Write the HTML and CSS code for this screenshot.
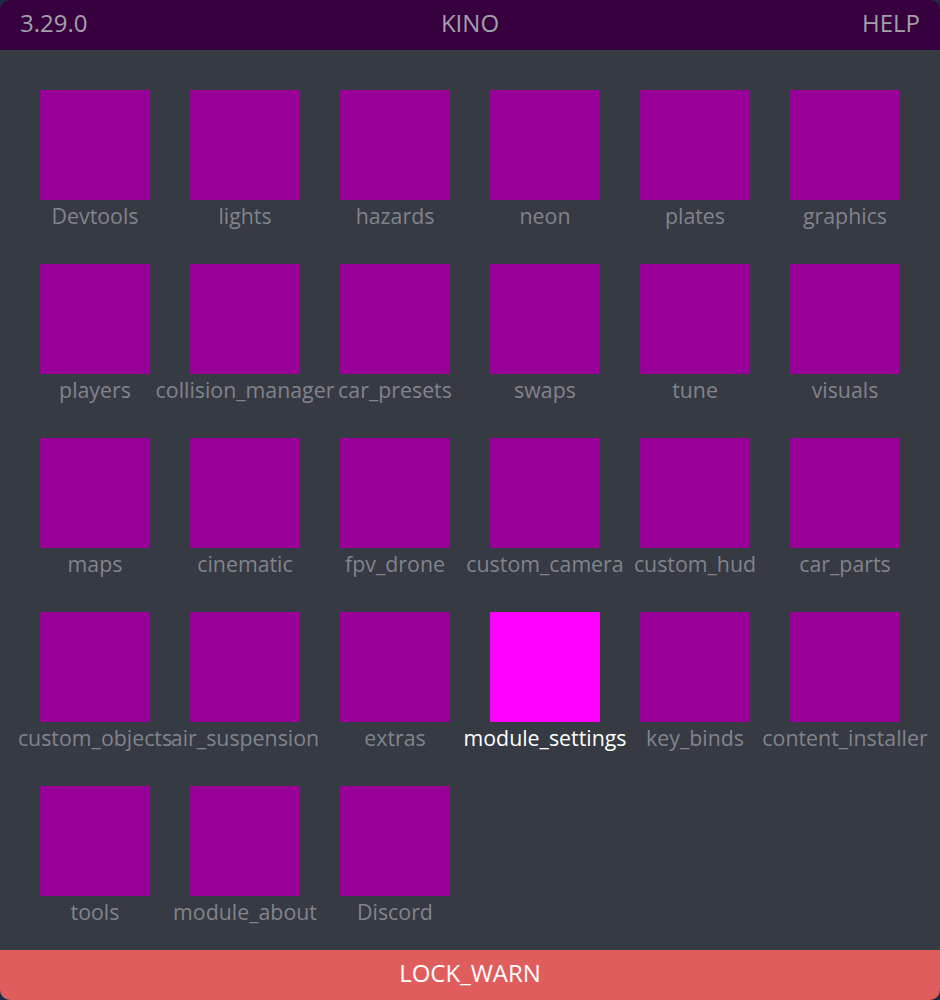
FILE: index.html
```html
<!DOCTYPE html>
<html>
<head>
<meta charset="utf-8">
<link rel="stylesheet" href="styles.css">
</head>
<body>
<div class="app">
  <header class="topbar">
    <span class="version">3.29.0</span>
    <span class="title">KINO</span>
    <span class="help">HELP</span>
  </header>
  <main class="grid">
    <div class="item"><div class="tile"></div><div class="label">Devtools</div></div>
    <div class="item"><div class="tile"></div><div class="label">lights</div></div>
    <div class="item"><div class="tile"></div><div class="label">hazards</div></div>
    <div class="item"><div class="tile"></div><div class="label">neon</div></div>
    <div class="item"><div class="tile"></div><div class="label">plates</div></div>
    <div class="item"><div class="tile"></div><div class="label">graphics</div></div>
    <div class="item"><div class="tile"></div><div class="label">players</div></div>
    <div class="item"><div class="tile"></div><div class="label">collision_manager</div></div>
    <div class="item"><div class="tile"></div><div class="label">car_presets</div></div>
    <div class="item"><div class="tile"></div><div class="label">swaps</div></div>
    <div class="item"><div class="tile"></div><div class="label">tune</div></div>
    <div class="item"><div class="tile"></div><div class="label">visuals</div></div>
    <div class="item"><div class="tile"></div><div class="label">maps</div></div>
    <div class="item"><div class="tile"></div><div class="label">cinematic</div></div>
    <div class="item"><div class="tile"></div><div class="label">fpv_drone</div></div>
    <div class="item"><div class="tile"></div><div class="label">custom_camera</div></div>
    <div class="item"><div class="tile"></div><div class="label">custom_hud</div></div>
    <div class="item"><div class="tile"></div><div class="label">car_parts</div></div>
    <div class="item"><div class="tile"></div><div class="label">custom_objects</div></div>
    <div class="item"><div class="tile"></div><div class="label">air_suspension</div></div>
    <div class="item"><div class="tile"></div><div class="label">extras</div></div>
    <div class="item active"><div class="tile"></div><div class="label">module_settings</div></div>
    <div class="item"><div class="tile"></div><div class="label">key_binds</div></div>
    <div class="item"><div class="tile"></div><div class="label">content_installer</div></div>
    <div class="item"><div class="tile"></div><div class="label">tools</div></div>
    <div class="item"><div class="tile"></div><div class="label">module_about</div></div>
    <div class="item"><div class="tile"></div><div class="label">Discord</div></div>
  </main>
  <footer class="footer">LOCK_WARN</footer>
</div>
</body>
</html>
```

FILE: styles.css
```css
html, body {
  margin: 0;
  padding: 0;
  width: 940px;
  height: 1000px;
  background: #1c2c44;
  overflow: hidden;
}

.app {
  width: 940px;
  height: 1000px;
  display: flex;
  flex-direction: column;
  background: #363a42;
  border-radius: 10px;
  overflow: hidden;
  font-family: "Open Sans", "Liberation Sans", sans-serif;
}

.topbar {
  height: 50px;
  flex: 0 0 50px;
  box-sizing: border-box;
  background: #37003f;
  display: flex;
  align-items: center;
  justify-content: space-between;
  padding: 0 20px 5px;
  color: #a2a0a8;
  font-size: 24px;
}

.topbar .version,
.topbar .help {
  width: 100px;
}

.topbar .help {
  text-align: right;
}

.grid {
  flex: 1 1 auto;
  min-height: 0;
  overflow: hidden;
  display: grid;
  grid-template-columns: repeat(6, 150px);
  grid-auto-rows: 174px;
  padding: 40px 20px 0;
  align-content: start;
}

.item {
  display: flex;
  flex-direction: column;
  align-items: center;
}

.tile {
  width: 110px;
  height: 110px;
  flex: 0 0 110px;
  background: #980098;
}

.label {
  margin-top: 1px;
  font-size: 21.33px;
  line-height: 29px;
  color: #81848c;
  white-space: nowrap;
}

.item.active .tile {
  background: #ff00ff;
}

.item.active .label {
  color: #ffffff;
}

.footer {
  height: 50px;
  flex: 0 0 50px;
  box-sizing: border-box;
  padding-bottom: 5px;
  background: #e05d5d;
  color: #ffffff;
  font-size: 24px;
  display: flex;
  align-items: center;
  justify-content: center;
}
```
